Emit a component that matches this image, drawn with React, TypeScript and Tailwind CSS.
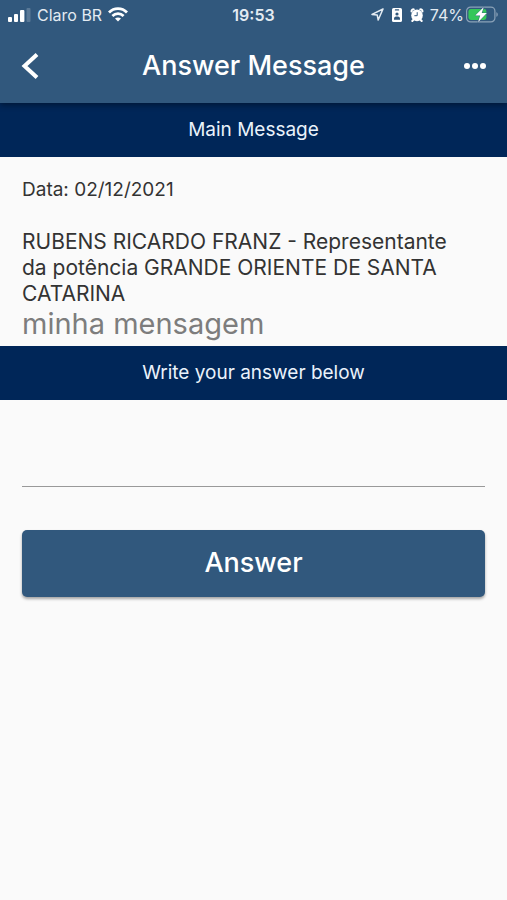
import { useState } from "react";

function SignalIcon() {
	return (
		<svg width="23" height="14" viewBox="0 0 23 14" fill="#fff" aria-hidden="true">
			<rect x="0" y="9" width="4" height="5" rx="1" />
			<rect x="6" y="6" width="4" height="8" rx="1" />
			<rect x="12" y="2" width="4.4" height="12" rx="1" />
			<rect x="18.5" y="0" width="4" height="14" rx="1" opacity="0.2" />
		</svg>
	);
}

function WifiIcon() {
	return (
		<svg width="20" height="15" viewBox="0 0 20 15" aria-hidden="true">
			<g fill="none" stroke="#fff" strokeWidth="2.8">
				<path d="M1 5.4C6 .3 14 .3 19 5.4" />
				<path d="M4.4 8.9C7.6 5.8 12.4 5.8 15.6 8.9" />
			</g>
			<path d="M10 14.6 7 11.6C8.7 10 11.3 10 13 11.6Z" fill="#fff" />
		</svg>
	);
}

function LocationIcon() {
	return (
		<svg width="13" height="13" viewBox="0 0 13 13" aria-hidden="true">
			<path
				d="M12 1 1 6.4 6.2 6.9 7.2 12Z"
				fill="none"
				stroke="#e3ebf2"
				strokeWidth="1.5"
				strokeLinejoin="round"
			/>
		</svg>
	);
}

function BadgeIcon() {
	return (
		<svg width="10" height="14" viewBox="0 0 10 14" aria-hidden="true">
			<rect width="10" height="14" rx="1.6" fill="#fff" />
			<g fill="#31587d">
				<rect x="2.8" y="1.3" width="4.4" height="1.2" rx="0.6" />
				<circle cx="5" cy="6" r="1.6" />
				<path d="M2 11.8V10.4C2 8 8 8 8 10.4v1.4Z" />
			</g>
		</svg>
	);
}

function AlarmIcon() {
	return (
		<svg width="14" height="14" viewBox="0 0 14 14" aria-hidden="true">
			<g fill="none" stroke="#fff" strokeWidth="2" strokeLinecap="round">
				<path d="M1.5 3.4C1.5 2 2.6 1.2 3.8 1.4M12.5 3.4C12.5 2 11.4 1.2 10.2 1.4" />
				<path d="M3.2 12 2.3 13M10.8 12l.9 1" />
			</g>
			<circle cx="7" cy="7.4" r="5.8" fill="#fff" />
			<path d="M7.2 4.2v3.5H4.4" fill="none" stroke="#31587d" strokeWidth="1" />
		</svg>
	);
}

function BatteryIcon() {
	return (
		<svg width="33" height="17" viewBox="0 0 33 17" aria-hidden="true">
			<rect
				x="0.6"
				y="1.1"
				width="28.3"
				height="14.8"
				rx="4"
				fill="none"
				stroke="#8ba2b8"
				strokeWidth="1.2"
			/>
			<rect x="2.4" y="3" width="18" height="11" rx="2.4" fill="#34c759" />
			<path d="M30.4 6.2c1.8.7 1.8 3.9 0 4.6Z" fill="#8ba2b8" />
			<path
				d="M17.8 1 9.2 9.6h5l-2.2 6.6 8.9-9.1h-5.2Z"
				fill="#fff"
				stroke="#31587d"
				strokeWidth="0.8"
				paintOrder="stroke"
			/>
		</svg>
	);
}

function StatusBar() {
	return (
		<div className="grid h-[29px] grid-cols-[1fr_auto_1fr] items-center px-2 text-base text-[#e3ebf2]">
			<div className="flex items-center gap-1.5">
				<SignalIcon />
				<span>Claro BR</span>
				<WifiIcon />
			</div>
			<span className="font-semibold">19:53</span>
			<div className="flex items-center justify-end gap-0.5">
				<div className="flex items-center gap-2 pr-1">
					<LocationIcon />
					<BadgeIcon />
					<AlarmIcon />
				</div>
				<span>74%</span>
				<BatteryIcon />
			</div>
		</div>
	);
}

function SectionTitle({ id, children }: { id: string; children: string }) {
	return (
		<h2
			id={id}
			className="flex h-[54px] items-center justify-center bg-[#002658] text-[19px] text-[#eaf2fb]"
		>
			{children}
		</h2>
	);
}

export default function App() {
	const [answer, setAnswer] = useState("");

	return (
		<div className="min-h-screen bg-[#fafafa] font-['Inter',sans-serif] text-[#333]">
			<header className="relative bg-[#31587d] shadow-[0_2px_6px_rgba(0,0,0,0.4)]">
				<StatusBar />
				<nav className="grid h-[74px] grid-cols-[1fr_auto_1fr] items-center px-5 text-white">
					<button type="button" aria-label="Back" className="justify-self-start">
						<svg width="20" height="28" viewBox="0 0 20 28" aria-hidden="true">
							<path
								d="M17 2.5 4.5 14 17 25.5"
								fill="none"
								stroke="#fff"
								strokeWidth="4"
							/>
						</svg>
					</button>
					<h1 className="text-[27px] font-medium">Answer Message</h1>
					<button type="button" aria-label="More options" className="justify-self-end">
						<svg width="24" height="8" viewBox="0 0 24 8" fill="#fff" aria-hidden="true">
							<circle cx="4" cy="4" r="3" />
							<circle cx="12" cy="4" r="3" />
							<circle cx="20" cy="4" r="3" />
						</svg>
					</button>
				</nav>
			</header>

			<main>
				<SectionTitle id="main-message">Main Message</SectionTitle>
				<section aria-labelledby="main-message" className="px-[22px] pb-[5px] pt-5">
					<p className="text-[19px] leading-[26px]">Data: 02/12/2021</p>
					<p className="mt-[26px] pr-6 text-[21px] leading-[26px]">
						RUBENS RICARDO FRANZ - Representante da potência GRANDE ORIENTE DE
						SANTA CATARINA
					</p>
					<p className="text-[29px] leading-[34px] text-[#7d7d7d]">
						minha mensagem
					</p>
				</section>

				<SectionTitle id="write-answer">Write your answer below</SectionTitle>
				<form className="px-[22px] pt-6" onSubmit={(e) => e.preventDefault()}>
					<input
						type="text"
						aria-labelledby="write-answer"
						value={answer}
						onChange={(e) => setAnswer(e.target.value)}
						className="block h-[63px] w-full border-b border-[#999] bg-transparent text-xl outline-none"
					/>
					<button
						type="submit"
						className="mt-[43px] h-[67px] w-full rounded-[5px] bg-[#31587d] text-[27px] font-medium text-white shadow-[0_2px_3px_rgba(0,0,0,0.35)]"
					>
						Answer
					</button>
				</form>
			</main>
		</div>
	);
}
